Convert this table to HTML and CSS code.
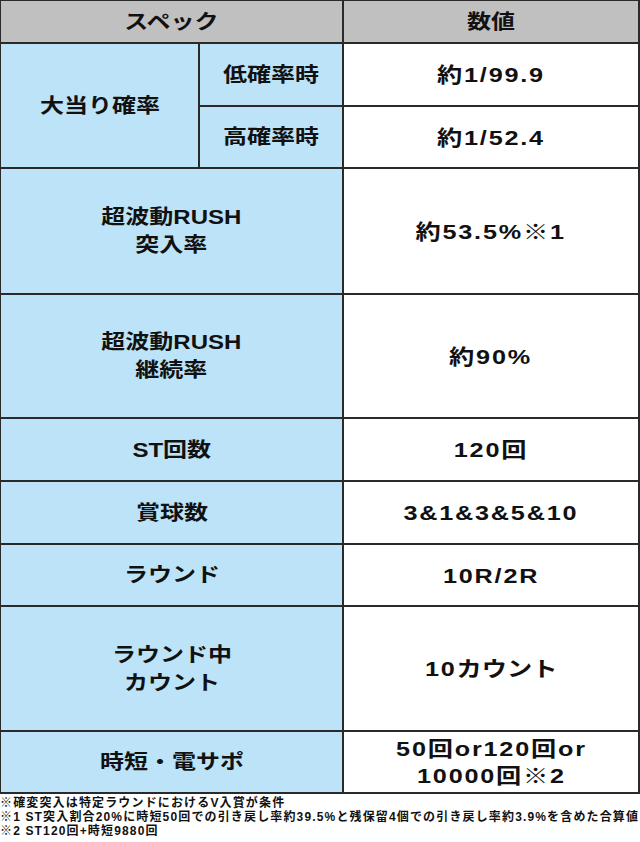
FILE: index.html
```html
<!DOCTYPE html>
<html lang="ja">
<head>
<meta charset="utf-8">
<link rel="stylesheet" href="styles.css">
</head>
<body>
<div class="spec">
  <div class="cell head span2"><span class="t">スペック</span></div>
  <div class="cell head"><span class="t">数値</span></div>

  <div class="cell label tall2"><span class="t">大当り確率</span></div>
  <div class="cell label"><span class="t">低確率時</span></div>
  <div class="cell value"><span class="t">約1/99.9</span></div>
  <div class="cell label"><span class="t">高確率時</span></div>
  <div class="cell value"><span class="t">約1/52.4</span></div>

  <div class="cell label span2"><span class="t">超波動RUSH<br>突入率</span></div>
  <div class="cell value"><span class="t">約53.5%※1</span></div>

  <div class="cell label span2"><span class="t">超波動RUSH<br>継続率</span></div>
  <div class="cell value"><span class="t">約90%</span></div>

  <div class="cell label span2"><span class="t">ST回数</span></div>
  <div class="cell value"><span class="t">120回</span></div>

  <div class="cell label span2"><span class="t">賞球数</span></div>
  <div class="cell value"><span class="t">3&amp;1&amp;3&amp;5&amp;10</span></div>

  <div class="cell label span2"><span class="t">ラウンド</span></div>
  <div class="cell value"><span class="t">10R/2R</span></div>

  <div class="cell label span2"><span class="t">ラウンド中<br>カウント</span></div>
  <div class="cell value"><span class="t">10<span class="kana">カウント</span></span></div>

  <div class="cell label span2"><span class="t">時短・電サポ</span></div>
  <div class="cell value"><span class="t">50回or120回or<br>10000回※2</span></div>
</div>
<div class="notes">
  <p>※確変突入は特定ラウンドにおけるV入賞が条件</p>
  <p>※1 ST突入割合20%に時短50回での引き戻し率約39.5%と残保留4個での引き戻し率約3.9%を含めた合算値</p>
  <p>※2 ST120回+時短9880回</p>
</div>
</body>
</html>
```

FILE: styles.css
```css
html, body {
  margin: 0;
  padding: 0;
  background: #ffffff;
}

body {
  width: 640px;
  font-family: "Liberation Sans", "Noto Sans CJK JP", sans-serif;
  font-weight: bold;
  color: #111111;
}

.spec {
  display: grid;
  grid-template-columns: 197px 142px 294px;
  grid-template-rows: 41px 61px 60px 124px 122px 61px 61px 60px 123px 60px;
  gap: 2px;
  padding: 1px 2px 2px 1px;
  background: #2a2a2a;
}

.cell {
  display: flex;
  align-items: center;
  justify-content: center;
  text-align: center;
  font-size: 20px;
  line-height: 28px;
}

.head {
  background: #c0c0c0;
}

.label {
  background: #bce3f7;
}

.value {
  background: #ffffff;
  font-size: 21px;
  line-height: 27px;
  letter-spacing: 1.5px;
}

.kana {
  letter-spacing: 0;
}

.span2 {
  grid-column: span 2;
}

.tall2 {
  grid-row: span 2;
}

.t {
  display: inline-block;
  transform: scaleX(1.2);
}

.notes {
  padding-top: 2px;
}

.notes p {
  margin: 0;
  font-size: 12px;
  line-height: 14px;
  letter-spacing: 1.15px;
  white-space: nowrap;
}
```
